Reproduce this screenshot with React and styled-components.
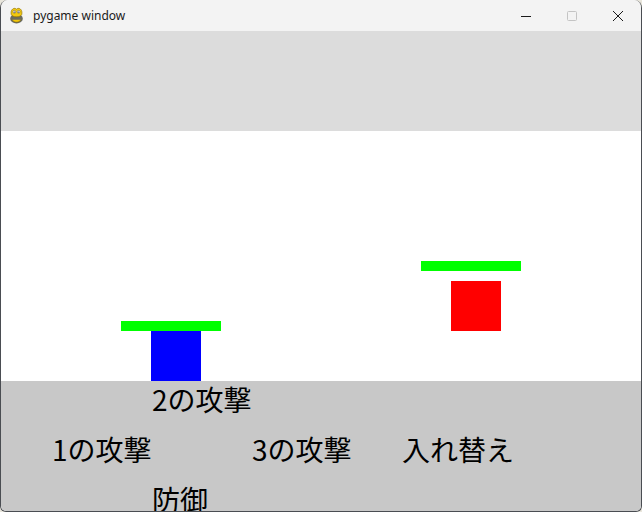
import React from "react";
import styled, { createGlobalStyle } from "styled-components";

const GlobalStyle = createGlobalStyle`
  html, body {
    margin: 0;
    padding: 0;
    background: #e9e6dc;
  }
`;

// window frame
const Window = styled.div`
  width: 642px;
  height: 512px;
  box-sizing: border-box;
  border: 1px solid #4a4d52;
  border-top: none;
  border-radius: 8px 8px 6px 6px;
  overflow: hidden;
  display: flex;
  flex-direction: column;
  background: #f3f3f3;
`;

const TitleBar = styled.div`
  height: 31px;
  flex: none;
  display: flex;
  align-items: center;
  background: #f3f3f3;
  font-family: "Noto Sans", "Liberation Sans", sans-serif;
  font-size: 12px;
  color: #1a1a1a;
`;

const AppIcon = styled.svg`
  width: 19px;
  height: 19px;
  margin: 0 7px 0 6px;
`;

const Title = styled.span`
  flex: 1;
  padding-bottom: 1px;
`;

const Controls = styled.div`
  display: flex;
  height: 100%;
`;

const ControlButton = styled.div`
  width: 46px;
  height: 100%;
  display: flex;
  align-items: center;
  justify-content: center;
  color: ${(p) => (p.disabled ? "#c4c4c4" : "#1a1a1a")};
`;

// pygame surface 640x480
const Surface = styled.div`
  flex: none;
  width: 640px;
  height: 480px;
  display: flex;
  flex-direction: column;
`;

const TopBand = styled.div`
  height: 100px;
  background: #dcdcdc;
`;

const Field = styled.div`
  position: relative;
  height: 250px;
  background: #ffffff;
`;

const Sprite = styled.div`
  position: absolute;
  left: ${(p) => p.x}px;
  top: ${(p) => p.y}px;
  width: ${(p) => p.w}px;
  height: ${(p) => p.h}px;
  background: ${(p) => p.color};
`;

const Menu = styled.div`
  height: 130px;
  background: #c8c8c8;
  display: grid;
  grid-template-columns: repeat(12, 50px);
  grid-template-rows: repeat(3, 50px);
  padding-left: 50px;
`;

const Command = styled.div`
  grid-column: ${(p) => p.col} / span 3;
  grid-row: ${(p) => p.row};
  font-family: "Noto Sans CJK JP", "Noto Sans", sans-serif;
  font-size: 28px;
  line-height: 36px;
  margin-left: 1px;
  color: #000000;
  white-space: nowrap;
`;

const PygameIcon = () => (
  <AppIcon viewBox="0 0 18 18">
    <ellipse cx="9" cy="12" rx="6" ry="4.5" fill="#6b6b5e" />
    <path d="M4 8 C3 3 7 1 9 3 C11 1 15 3 14 8 C13 11 5 11 4 8 Z" fill="#f2c80f" stroke="#8a6d00" strokeWidth="0.6" />
    <circle cx="7" cy="5.5" r="1.3" fill="#fff" stroke="#333" strokeWidth="0.4" />
    <circle cx="11" cy="5.5" r="1.3" fill="#fff" stroke="#333" strokeWidth="0.4" />
    <circle cx="7" cy="5.6" r="0.5" fill="#111" />
    <circle cx="11" cy="5.6" r="0.5" fill="#111" />
    <path d="M5 13 C6 16 12 16 13 13" fill="#f2c80f" stroke="#8a6d00" strokeWidth="0.5" />
  </AppIcon>
);

const commands = [
  { label: "2の攻撃", col: 3, row: 1 },
  { label: "1の攻撃", col: 1, row: 2 },
  { label: "3の攻撃", col: 5, row: 2 },
  { label: "入れ替え", col: 8, row: 2 },
  { label: "防御", col: 3, row: 3 },
];

const App = () => {
  return (
    <>
      <GlobalStyle />
      <Window>
        <TitleBar>
          <PygameIcon />
          <Title>pygame window</Title>
          <Controls>
            <ControlButton>
              <svg width="10" height="10" viewBox="0 0 10 10">
                <path d="M0 5.5 H10" stroke="currentColor" strokeWidth="1" />
              </svg>
            </ControlButton>
            <ControlButton disabled>
              <svg width="10" height="10" viewBox="0 0 10 10">
                <rect x="0.5" y="0.5" width="9" height="9" rx="1" fill="none" stroke="currentColor" strokeWidth="1" />
              </svg>
            </ControlButton>
            <ControlButton>
              <svg width="10" height="10" viewBox="0 0 10 10">
                <path d="M0 0 L10 10 M10 0 L0 10" stroke="currentColor" strokeWidth="1" />
              </svg>
            </ControlButton>
          </Controls>
        </TitleBar>
        <Surface>
          <TopBand />
          <Field>
            <Sprite x={120} y={190} w={100} h={10} color="#00ff00" />
            <Sprite x={150} y={200} w={50} h={50} color="#0000ff" />
            <Sprite x={420} y={130} w={100} h={10} color="#00ff00" />
            <Sprite x={450} y={150} w={50} h={50} color="#ff0000" />
          </Field>
          <Menu>
            {commands.map((c) => (
              <Command key={c.label} col={c.col} row={c.row}>
                {c.label}
              </Command>
            ))}
          </Menu>
        </Surface>
      </Window>
    </>
  );
};

export default App;
